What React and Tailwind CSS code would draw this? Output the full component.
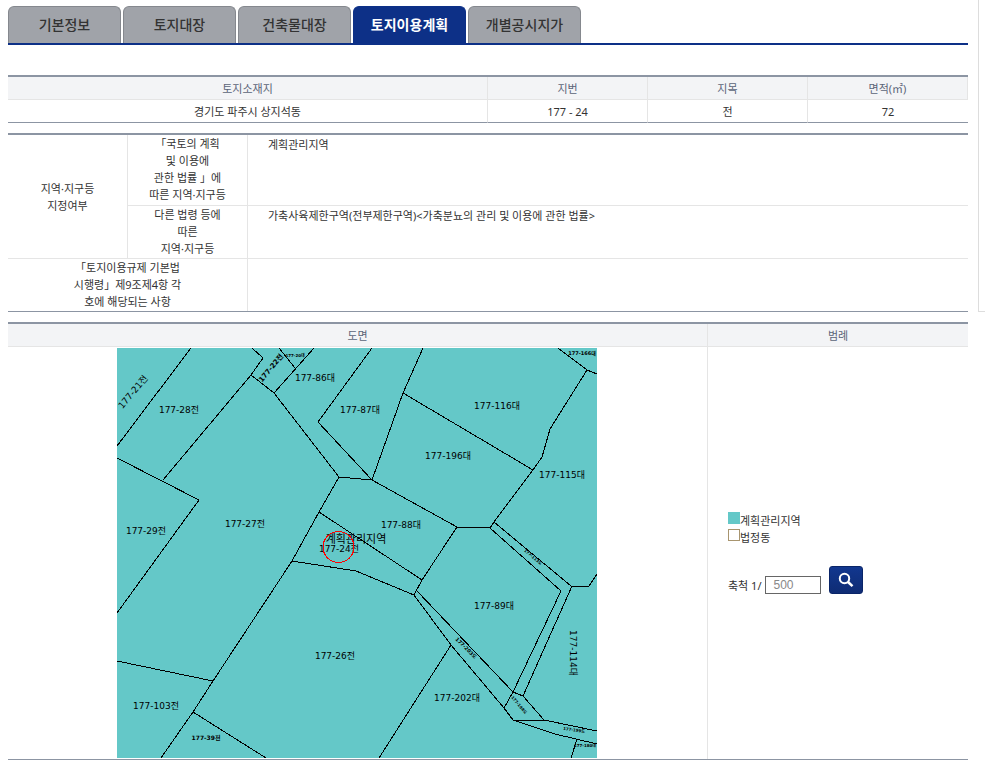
import { useState } from "react";

const TABS = ["기본정보", "토지대장", "건축물대장", "토지이용계획", "개별공시지가"];

/* parcel boundaries on the 480 x 410 drawing */
const BOUNDARIES = [
  "74,0 0,98",
  "0,110 82,152 0,265",
  "46,132 134,27 146,10 135,0",
  "134,27 157,45 222,129 255,132",
  "157,45 197,0",
  "162,0 178,20",
  "255,0 201,74 255,132",
  "306,0 286,45 255,132 340,179 373,180",
  "286,45 416,122",
  "441,0 470,22 480,26",
  "470,22 433,81 425,109 416,122 377,174 373,180",
  "340,179 305,232 297,247",
  "202,164 305,232",
  "222,129 202,164 175,213 96,333 76,364 44,410",
  "175,213 239,223 297,247",
  "0,313 96,333",
  "76,364 149,410",
  "297,247 334,297 387,360 396,372 438,386 480,396",
  "334,297 262,410",
  "300,243 396,344 406,348 427,372",
  "396,372 427,372 480,383",
  "396,344 387,360",
  "373,180 444,243 396,344",
  "377,174 454,238 472,238 480,226",
  "455,238 406,348",
  "460,391 454,410",
];

const PARCELS = [
  { name: "177-21전", x: 16, y: 44, rotate: -50 },
  { name: "177-28전", x: 62, y: 62 },
  { name: "177-22전", x: 154, y: 20, rotate: -50, size: 7 },
  { name: "177-20대", x: 178, y: 8, size: 4 },
  { name: "177-86대", x: 198, y: 30 },
  { name: "177-87대", x: 243, y: 62 },
  { name: "177-116대", x: 380, y: 58 },
  { name: "177-196대", x: 331, y: 108 },
  { name: "177-115대", x: 445, y: 127 },
  { name: "177-166대", x: 465, y: 5, size: 5 },
  { name: "177-88대", x: 284, y: 177 },
  { name: "177-27전", x: 128, y: 176 },
  { name: "177-29전", x: 29, y: 183 },
  { name: "177-24전", x: 222, y: 201 },
  { name: "177-26전", x: 218, y: 308 },
  { name: "177-103전", x: 39, y: 358 },
  { name: "177-39전", x: 89, y: 390, size: 6 },
  { name: "177-202대", x: 340, y: 350 },
  { name: "177-89대", x: 377, y: 258 },
  { name: "177-114대", x: 456, y: 305, rotate: 90 },
  { name: "177-113도", x: 416, y: 209, rotate: 40, size: 4 },
  { name: "177-203도", x: 349, y: 300, rotate: 45, size: 5 },
  { name: "177-198도", x: 402, y: 357, rotate: 50, size: 4 },
  { name: "177-199도", x: 457, y: 382, rotate: 8, size: 4 },
  { name: "177-180대", x: 468, y: 398, size: 4 },
];

function Tabs({ active, onSelect }) {
  return (
    <nav className="flex gap-0.5 border-b-2 border-[#0d3087]">
      {TABS.map((tab) => (
        <button
          key={tab}
          type="button"
          onClick={() => onSelect(tab)}
          className={
            tab === active
              ? "h-[37px] w-[113px] rounded-t-md border border-b-0 border-[#0d3087] bg-[#0d3087] text-sm font-bold text-white"
              : "h-[37px] w-[113px] rounded-t-md border border-b-0 border-[#85888e] bg-[#a0a3a9] text-sm font-medium text-[#333]"
          }
        >
          {tab}
        </button>
      ))}
    </nav>
  );
}

function LandTable() {
  const head = "h-[23px] border-r border-b border-[#e5e5e5] bg-[#f3f4f6] p-0 font-normal text-[#5b6478]";
  const cell = "h-[23px] border-r border-b border-r-[#e5e5e5] border-b-[#8c95a3] p-0 last:border-r-0";
  return (
    <table className="w-full table-fixed border-separate border-spacing-0 border-t-2 border-[#8c95a3] text-center">
      <colgroup>
        <col className="w-1/2" />
        <col className="w-1/6" />
        <col className="w-1/6" />
        <col className="w-1/6" />
      </colgroup>
      <thead>
        <tr>
          <th className={head}>토지소재지</th>
          <th className={head}>지번</th>
          <th className={head}>지목</th>
          <th className={head}>면적(㎡)</th>
        </tr>
      </thead>
      <tbody>
        <tr>
          <td className={cell}>경기도 파주시 상지석동</td>
          <td className={cell}>177 - 24</td>
          <td className={cell}>전</td>
          <td className={cell}>72</td>
        </tr>
      </tbody>
    </table>
  );
}

function ZoningTable() {
  const head = "border-r border-b border-[#e5e5e5] p-0 text-center font-normal";
  const cell = "border-b border-[#e5e5e5] px-5 pt-px pb-0 align-top";
  return (
    <table className="w-full table-fixed border-separate border-spacing-0 border-t-2 border-b border-[#8c95a3]">
      <colgroup>
        <col className="w-1/8" />
        <col className="w-1/8" />
        <col className="w-3/4" />
      </colgroup>
      <tbody>
        <tr className="h-[71px]">
          <th rowSpan={2} className={head}>
            지역·지구등<br />지정여부
          </th>
          <th className={`${head} align-top`}>
            「국토의 계획<br />및 이용에<br />관한 법률 」에<br />따른 지역·지구등
          </th>
          <td className={cell}>계획관리지역</td>
        </tr>
        <tr className="h-[53px]">
          <th className={`${head} align-top`}>
            다른 법령 등에<br />따른<br />지역·지구등
          </th>
          <td className={cell}>
            가축사육제한구역(전부제한구역)&lt;가축분뇨의 관리 및 이용에 관한 법률&gt;
          </td>
        </tr>
        <tr className="h-[52px]">
          <th colSpan={2} className="border-r border-[#e5e5e5] p-0 text-center align-top font-normal">
            「토지이용규제 기본법<br />시행령」제9조제4항 각<br />호에 해당되는 사항
          </th>
          <td className="px-5 pt-px pb-0"></td>
        </tr>
      </tbody>
    </table>
  );
}

function ParcelMap() {
  return (
    <svg viewBox="0 0 480 410" className="mx-auto block w-[480px] max-w-full bg-[#64c8c8]" role="img">
      <g fill="none" stroke="#000" strokeWidth="1" shapeRendering="crispEdges">
        {BOUNDARIES.map((points) => (
          <polyline key={points} points={points} />
        ))}
      </g>
      <g className="font-['DejaVu_Sans','Noto_Sans_CJK_KR',sans-serif]" fill="#000" textAnchor="middle">
        {PARCELS.map(({ name, x, y, rotate = 0, size = 9 }) => (
          <text
            key={name}
            transform={`translate(${x} ${y}) rotate(${rotate})`}
            y={size / 3}
            fontSize={size}
            fontWeight={size < 8 ? 700 : 400}
          >
            {name}
          </text>
        ))}
        <text x="239" y="195" fontSize="11">계획관리지역</text>
      </g>
      <circle cx="221.5" cy="199" r="15.5" fill="none" stroke="#f00" shapeRendering="crispEdges" />
    </svg>
  );
}

function Legend() {
  const [scale, setScale] = useState("500");
  return (
    <div className="px-5">
      <ul>
        <li className="flex items-start">
          <span className="size-3 bg-[#64c8c8]" />
          계획관리지역
        </li>
        <li className="flex items-start">
          <span className="size-3 border border-[#a8956f]" />
          법정동
        </li>
      </ul>
      <form className="mt-5 flex items-end" onSubmit={(e) => e.preventDefault()}>
        <label htmlFor="scale">축척 1/</label>
        <input
          id="scale"
          value={scale}
          onChange={(e) => setScale(e.target.value)}
          className="ml-1 h-[18px] w-14 border border-[#666] px-[7px] font-['Liberation_Sans',sans-serif] text-xs text-[#888]"
        />
        <button
          type="submit"
          aria-label="검색"
          className="ml-2 flex h-7 w-[34px] items-center justify-center rounded-[3px] border border-[#0a2568] bg-linear-to-b from-[#12378f] to-[#0f2c74]"
        >
          <svg viewBox="0 0 16 16" className="size-4" fill="none" stroke="#fff">
            <circle cx="6.5" cy="6.5" r="4.7" strokeWidth="2" />
            <path d="M10 10l4.5 4.2" strokeWidth="2.5" />
          </svg>
        </button>
      </form>
    </div>
  );
}

function MapTable() {
  return (
    <table className="w-full table-fixed border-separate border-spacing-0 border-t-2 border-b border-[#8c95a3]">
      <colgroup>
        <col />
        <col className="w-[260px]" />
      </colgroup>
      <thead>
        <tr className="bg-[#f3f4f6] text-[#5b6478]">
          <th className="h-[23px] border-r border-b border-[#e5e5e5] p-0 font-normal">도면</th>
          <th className="h-[23px] border-b border-[#e5e5e5] p-0 font-normal">범례</th>
        </tr>
      </thead>
      <tbody>
        <tr>
          <td className="border-r border-[#e5e5e5] py-px pr-px pl-0">
            <ParcelMap />
          </td>
          <td className="p-0">
            <Legend />
          </td>
        </tr>
      </tbody>
    </table>
  );
}

export default function App() {
  const [active, setActive] = useState("토지이용계획");

  return (
    <div
      lang="ko"
      className="flex gap-2.5 bg-white pl-2 font-['Noto_Sans','Noto_Sans_CJK_KR',sans-serif] text-[11px] leading-[17px] text-[#333]"
    >
      <main className="min-w-0 flex-1 pt-1.5">
        <Tabs active={active} onSelect={setActive} />
        <div className="mt-[30px] flex flex-col gap-2.5">
          <LandTable />
          <ZoningTable />
          <MapTable />
        </div>
      </main>
      <aside className="h-[312px] w-[7px] border-b border-l border-[#ddd]" />
    </div>
  );
}
